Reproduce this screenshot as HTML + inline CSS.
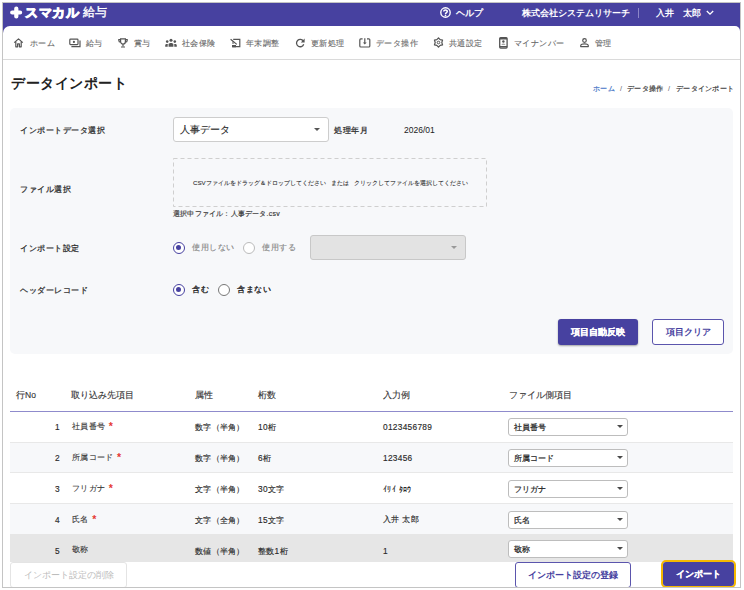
<!DOCTYPE html>
<html><head><meta charset="utf-8">
<style>
*{box-sizing:border-box;margin:0;padding:0}
html,body{width:744px;height:590px;overflow:hidden;background:#fff;font-family:"Liberation Sans",sans-serif;color:#333}
.a{position:absolute;white-space:nowrap}
svg.a{overflow:visible}
#frame{position:absolute;left:2px;top:2px;width:739px;height:586px;border:1px solid #c4c4c4}
.mask{position:absolute;background:#fff}
#hdr{left:3px;top:3px;width:737px;height:30px;background:#4741a0}
#nav{left:3px;top:26px;width:737px;height:34px;background:#fff;border-radius:7px 5px 0 0;border-bottom:1px solid #dadada}
.w{color:#fff}
.nv{font-size:8.3px;color:#6a6a6a;line-height:10px;top:38px;letter-spacing:0.4px;-webkit-text-stroke:0.12px #6a6a6a}
.bc{font-size:7.3px;color:#444;line-height:9px;top:84px;letter-spacing:0.3px;-webkit-text-stroke:0.2px #444}
.dz{top:179px;font-size:6.2px;color:#333;line-height:8px;-webkit-text-stroke:0.1px #333}
.lbl{font-size:8.4px;color:#333;line-height:10px;letter-spacing:0.5px;-webkit-text-stroke:0.28px #333}
.panel{left:10px;top:108px;width:723px;height:246px;background:#f7f8fa;border-radius:5px}
.caret{position:absolute;width:0;height:0;border-left:3px solid transparent;border-right:3px solid transparent;border-top:3.2px solid #555}
.radio{width:12px;height:12px;border-radius:50%;border:1.7px solid #4741a0;background:#fff}
.radio.on::after{content:"";position:absolute;left:1.8px;top:1.8px;width:5px;height:5px;border-radius:50%;background:#4741a0}
.radio.off{border-color:#777}
.radio.dis{border-color:#bbb}
.btnp{background:#4741a0;color:#fff;font-weight:bold;font-size:9px;border-radius:3px;text-align:center;-webkit-text-stroke:0.2px #fff}
.btno{background:#fff;color:#4741a0;font-weight:bold;font-size:9px;border:1px solid #5b55ad;border-radius:3px;text-align:center}
.th{font-size:8.5px;color:#333;line-height:10px;top:390px;-webkit-text-stroke:0.12px #333}
.row{left:10px;width:723px;height:31px;border-bottom:1px solid #e8e8e8}
.td{font-size:8.3px;color:#2a2a2a;line-height:10px;letter-spacing:0.3px;-webkit-text-stroke:0.15px #2a2a2a}
.tn{font-size:8.3px;color:#333;line-height:10px;letter-spacing:0.3px;-webkit-text-stroke:0.1px #333}
.req{color:#e53935;-webkit-text-stroke:0;font-size:10.5px;position:relative;top:1px;left:1px;font-weight:bold}
.rs{width:120px;height:18px;background:#fff;border:1px solid #bdbdbd;border-radius:3px;font-size:8.3px;color:#222;line-height:17px;padding-left:5px;-webkit-text-stroke:0.2px #222}
.rs .caret{left:108px;top:6px;border-left-width:3px;border-right-width:3px;border-top-width:3.5px;border-top-color:#4a4a4a}
</style></head><body>

<!-- header -->
<div class="a" id="hdr"></div>
<svg class="a" style="left:10px;top:6px" width="13" height="13" viewBox="0 0 13 13"><path d="M6.3 2.6 V10.4 M2.2 6.5 H10.1" stroke="#fff" stroke-width="4.2" stroke-linecap="round"/></svg>
<div class="a w" style="left:25px;top:5px;font-size:13px;font-weight:bold;line-height:15px;letter-spacing:0.7px;-webkit-text-stroke:0.9px #fff">スマカル</div>
<div class="a w" style="left:82.5px;top:5px;font-size:12px;line-height:15px;-webkit-text-stroke:0.35px #fff">給与</div>
<svg class="a" style="left:439.5px;top:7px" width="11" height="11" viewBox="0 0 11 11"><circle cx="5.5" cy="5.5" r="4.7" stroke="#fff" stroke-width="1.4" fill="none"/><path d="M3.7 4.4 C3.7 2.5 7.3 2.5 7.3 4.3 C7.3 5.5 5.5 5.6 5.5 7" stroke="#fff" stroke-width="1.5" fill="none"/><circle cx="5.5" cy="8.3" r="0.85" fill="#fff"/></svg>
<div class="a w" style="left:456px;top:8px;font-size:8.5px;line-height:10px;-webkit-text-stroke:0.35px #fff">ヘルプ</div>
<div class="a w" style="left:522px;top:8px;font-size:8.9px;font-weight:bold;line-height:10px">株式会社システムリサーチ</div>
<div class="a" style="left:638px;top:8px;width:1px;height:10px;background:#8c86c8"></div>
<div class="a w" style="left:656px;top:8px;font-size:8.5px;font-weight:bold;line-height:10px">入井　太郎</div>
<svg class="a" style="left:706px;top:10px" width="8" height="6" viewBox="0 0 8 6"><path d="M0.8 1 L4 4.2 L7.2 1" stroke="#fff" stroke-width="1.3" fill="none"/></svg>

<!-- nav -->
<div class="a" id="nav"></div>
<svg class="a" style="left:13px;top:38px" width="11" height="10" viewBox="0 0 11 10"><path d="M1.2 4.6 L5.5 0.9 L9.8 4.6 M2.8 3.4 V8.8 H4.6 V5.9 H6.4 V8.8 H8.2 V3.4" stroke="#555" stroke-width="1.2" fill="none" stroke-linejoin="round"/></svg>
<div class="a nv" style="left:30px">ホーム</div>
<svg class="a" style="left:69px;top:38px" width="12" height="10" viewBox="0 0 12 10"><rect x="0.8" y="1.2" width="8.2" height="5.4" rx="0.8" stroke="#555" stroke-width="1.2" fill="none"/><circle cx="4.9" cy="3.9" r="1.1" fill="#555"/><path d="M11 2.6 V8.6 H2.4" stroke="#555" stroke-width="1.2" fill="none"/></svg>
<div class="a nv" style="left:86px">給与</div>
<svg class="a" style="left:118px;top:38px" width="10" height="10" viewBox="0 0 10 10"><path d="M2.6 0.9 H7.4 V3.5 C7.4 5.2 6.3 6.1 5 6.1 C3.7 6.1 2.6 5.2 2.6 3.5 Z M2.6 1.6 H0.8 V2.6 C0.8 3.6 1.6 4.2 2.7 4.2 M7.4 1.6 H9.2 V2.6 C9.2 3.6 8.4 4.2 7.3 4.2 M5 6.1 V8.3 M3 9 H7" stroke="#555" stroke-width="1.2" fill="none"/></svg>
<div class="a nv" style="left:134px">賞与</div>
<svg class="a" style="left:165px;top:38px" width="12" height="10" viewBox="0 0 12 10"><circle cx="6" cy="2.2" r="1.5" fill="#555"/><circle cx="2.2" cy="3.6" r="1.3" fill="#555"/><circle cx="9.8" cy="3.6" r="1.3" fill="#555"/><path d="M3.6 8.8 V6.6 C3.6 5.6 4.6 5.1 6 5.1 C7.4 5.1 8.4 5.6 8.4 6.6 V8.8 Z" fill="#555"/><path d="M0.2 8.8 V7.4 C0.2 6.3 1 5.9 2.2 5.9 L2.9 6 C2.7 6.3 2.7 6.6 2.7 7 V8.8 Z M11.8 8.8 V7.4 C11.8 6.3 11 5.9 9.8 5.9 L9.1 6 C9.3 6.3 9.3 6.6 9.3 7 V8.8 Z" fill="#555"/></svg>
<div class="a nv" style="left:182px">社会保険</div>
<svg class="a" style="left:230px;top:38px" width="11" height="10" viewBox="0 0 11 10"><path d="M3.2 1.3 H9.8 V8.6 H2.4 M0.6 1.2 L6.8 6.4" stroke="#555" stroke-width="1.2" fill="none"/><path d="M2 7 H6 V9.3 H2 Z" fill="#555"/><path d="M3 3.2 L3 6" stroke="#555" stroke-width="1"/></svg>
<div class="a nv" style="left:246px">年末調整</div>
<svg class="a" style="left:295px;top:38px" width="11" height="10" viewBox="0 0 11 10"><path d="M8.3 3 A3.7 3.7 0 1 0 8.7 6.3" stroke="#555" stroke-width="1.3" fill="none"/><path d="M9.6 0.6 V4.4 H5.8 Z" fill="#555"/></svg>
<div class="a nv" style="left:311px">更新処理</div>
<svg class="a" style="left:359px;top:38px" width="12" height="10" viewBox="0 0 12 10"><path d="M3.6 0.9 H1.8 C1.2 0.9 0.8 1.3 0.8 1.9 V8 C0.8 8.6 1.2 9 1.8 9 H9.8 C10.4 9 10.8 8.6 10.8 8 V1.9 C10.8 1.3 10.4 0.9 9.8 0.9 H8" stroke="#555" stroke-width="1.2" fill="none"/><path d="M5.8 0.3 V5" stroke="#555" stroke-width="1.2"/><path d="M3.9 4.6 H7.7 L5.8 6.6 Z" fill="#555"/></svg>
<div class="a nv" style="left:376px">データ操作</div>
<svg class="a" style="left:433px;top:37px" width="11" height="11" viewBox="0 0 11 11"><path d="M5.50 0.80 L7.15 2.64 L9.57 3.15 L8.80 5.50 L9.57 7.85 L7.15 8.36 L5.50 10.20 L3.85 8.36 L1.43 7.85 L2.20 5.50 L1.43 3.15 L3.85 2.64 Z" stroke="#555" stroke-width="1.2" fill="none" stroke-linejoin="round"/><circle cx="5.5" cy="5.5" r="1.3" stroke="#555" stroke-width="1" fill="none"/></svg>
<div class="a nv" style="left:449px">共通設定</div>
<svg class="a" style="left:499px;top:37px" width="9" height="12" viewBox="0 0 9 12"><rect x="0.7" y="0.7" width="7.4" height="10.4" rx="1" stroke="#555" stroke-width="1.3" fill="none"/><path d="M0.7 1.6 H8.1 M0.7 9.8 H8.1" stroke="#555" stroke-width="1.6"/><circle cx="4.4" cy="4.5" r="1.2" fill="#555"/><path d="M2.4 7.6 C2.6 6.4 6.2 6.4 6.4 7.6 Z" fill="#555"/></svg>
<div class="a nv" style="left:514px">マイナンバー</div>
<svg class="a" style="left:580px;top:38px" width="9" height="10" viewBox="0 0 9 10"><circle cx="4.5" cy="2.5" r="1.8" stroke="#555" stroke-width="1.2" fill="none"/><path d="M0.7 8.6 V7.8 C0.7 6.4 2.6 5.8 4.5 5.8 C6.4 5.8 8.3 6.4 8.3 7.8 V8.6 Z" stroke="#555" stroke-width="1.2" fill="none" stroke-linejoin="round"/></svg>
<div class="a nv" style="left:595px">管理</div>

<!-- title -->
<div class="a" style="left:11px;top:74px;font-size:14.2px;font-weight:bold;color:#222;line-height:18px;letter-spacing:0.5px">データインポート</div>
<div class="a bc" style="left:593px;color:#4a78c8;-webkit-text-stroke:0.2px #4a78c8">ホーム</div>
<div class="a bc" style="left:620px;-webkit-text-stroke:0;color:#666">/</div>
<div class="a bc" style="left:627px">データ操作</div>
<div class="a bc" style="left:668px;-webkit-text-stroke:0;color:#666">/</div>
<div class="a bc" style="left:676px">データインポート</div>

<!-- panel -->
<div class="a panel"></div>
<div class="a lbl" style="left:20px;top:125px">インポートデータ選択</div>
<div class="a" style="left:173px;top:117px;width:156px;height:25px;background:#fff;border:1px solid #cdcdcd;border-radius:3px"></div>
<div class="a" style="left:180px;top:123px;font-size:9.6px;color:#282828;line-height:13px;-webkit-text-stroke:0.1px #282828">人事データ</div>
<div class="caret" style="left:314px;top:128px"></div>
<div class="a lbl" style="left:334px;top:125px">処理年月</div>
<div class="a" style="left:404px;top:125px;font-size:8.5px;color:#222;line-height:10px">2026/01</div>

<div class="a lbl" style="left:20px;top:184px">ファイル選択</div>
<svg class="a" style="left:173px;top:158px" width="315" height="50"><rect x="0.5" y="0.5" width="313" height="48" fill="none" stroke="#cfcfcf" stroke-width="1" stroke-dasharray="4 3"/></svg>
<div class="a dz" style="left:193px">CSVファイルをドラッグ＆ドロップしてください</div>
<div class="a dz" style="left:331px">または</div>
<div class="a dz" style="left:354px">クリックしてファイルを選択してください</div>
<div class="a" style="left:173px;top:209px;font-size:7px;color:#333;line-height:9px;letter-spacing:0.2px;-webkit-text-stroke:0.15px #333">選択中ファイル：人事データ.csv</div>

<div class="a lbl" style="left:20px;top:243px">インポート設定</div>
<div class="a radio on" style="left:173px;top:242px"></div>
<div class="a" style="left:192px;top:243px;font-size:8.2px;color:#888;line-height:10px;letter-spacing:0.5px;-webkit-text-stroke:0.15px #888">使用しない</div>
<div class="a radio dis" style="left:243px;top:242px"></div>
<div class="a" style="left:262px;top:243px;font-size:8.2px;color:#888;line-height:10px;letter-spacing:0.5px;-webkit-text-stroke:0.15px #888">使用する</div>
<div class="a" style="left:310px;top:235px;width:156px;height:25px;background:#e3e3e3;border:1px solid #c8c8c8;border-radius:3px"></div>
<div class="caret" style="left:451px;top:246px;border-top-color:#999"></div>

<div class="a lbl" style="left:20px;top:285px">ヘッダーレコード</div>
<div class="a radio on" style="left:173px;top:284px"></div>
<div class="a" style="left:192px;top:285px;font-size:8.2px;color:#222;line-height:10px;letter-spacing:0.5px;-webkit-text-stroke:0.3px #222">含む</div>
<div class="a radio off" style="left:218px;top:284px"></div>
<div class="a" style="left:237px;top:285px;font-size:8.2px;color:#222;line-height:10px;letter-spacing:0.5px;-webkit-text-stroke:0.3px #222">含まない</div>

<div class="a btnp" style="left:558px;top:319px;width:80px;height:26px;line-height:27px;box-shadow:0 1px 2px rgba(0,0,0,.35)">項目自動反映</div>
<div class="a btno" style="left:652px;top:319px;width:72px;height:26px;line-height:24px">項目クリア</div>

<!-- table -->
<div class="a th" style="left:16px">行No</div>
<div class="a th" style="left:71px">取り込み先項目</div>
<div class="a th" style="left:195px">属性</div>
<div class="a th" style="left:258px">桁数</div>
<div class="a th" style="left:383px">入力例</div>
<div class="a th" style="left:509px">ファイル側項目</div>
<div class="a" style="left:10px;top:411px;width:723px;height:1.5px;background:#8f8bcc"></div>

<div class="a row" style="top:412px;height:31px;background:#fff"></div>
<div class="a row" style="top:443px;height:30px;background:#f7f8fa"></div>
<div class="a row" style="top:473px;height:31px;background:#fff"></div>
<div class="a row" style="top:504px;height:30px;background:#f7f8fa;border-bottom:none"></div>
<div class="a row" style="top:533.5px;height:28.5px;background:#e6e6e6;border-bottom:none"></div>

<div class="a td" style="left:55px;top:422px">1</div>
<div class="a tn" style="left:72px;top:420px">社員番号 <span class="req">*</span></div>
<div class="a td" style="left:195px;top:422px">数字（半角）</div>
<div class="a td" style="left:258px;top:422px">10桁</div>
<div class="a td" style="left:383px;top:422px">0123456789</div>
<div class="a rs" style="left:508px;top:418px">社員番号<div class="caret"></div></div>

<div class="a td" style="left:55px;top:453px">2</div>
<div class="a tn" style="left:72px;top:451px">所属コード <span class="req">*</span></div>
<div class="a td" style="left:195px;top:453px">数字（半角）</div>
<div class="a td" style="left:258px;top:453px">6桁</div>
<div class="a td" style="left:383px;top:453px">123456</div>
<div class="a rs" style="left:508px;top:449px">所属コード<div class="caret"></div></div>

<div class="a td" style="left:55px;top:484px">3</div>
<div class="a tn" style="left:72px;top:482px">フリガナ <span class="req">*</span></div>
<div class="a td" style="left:195px;top:484px">文字（半角）</div>
<div class="a td" style="left:258px;top:484px">30文字</div>
<div class="a td" style="left:383px;top:484px">ｲﾘｲ ﾀﾛｳ</div>
<div class="a rs" style="left:508px;top:480px">フリガナ<div class="caret"></div></div>

<div class="a td" style="left:55px;top:515px">4</div>
<div class="a tn" style="left:72px;top:513px">氏名 <span class="req">*</span></div>
<div class="a td" style="left:195px;top:515px">文字（全角）</div>
<div class="a td" style="left:258px;top:515px">15文字</div>
<div class="a td" style="left:383px;top:514px">入井 太郎</div>
<div class="a rs" style="left:508px;top:511px">氏名<div class="caret"></div></div>

<div class="a td" style="left:55px;top:546px">5</div>
<div class="a tn" style="left:72px;top:544px">敬称</div>
<div class="a td" style="left:195px;top:546px">数値（半角）</div>
<div class="a td" style="left:258px;top:546px">整数1桁</div>
<div class="a td" style="left:383px;top:546px">1</div>
<div class="a rs" style="left:508px;top:540px">敬称<div class="caret"></div></div>

<!-- footer -->
<div class="a" style="left:10px;top:562px;width:117px;height:26px;background:#fff;border:1px solid #e4e4e4;border-radius:3px;font-size:9px;color:#bbb;text-align:center;line-height:24px">インポート設定の削除</div>
<div class="a btno" style="left:515px;top:562px;width:116px;height:26px;line-height:24px">インポート設定の登録</div>
<div class="a" style="left:660.5px;top:560px;width:75.5px;height:27.5px;border:2px solid #f5b800;border-radius:5px"></div>
<div class="a btnp" style="left:662.5px;top:562px;width:71.5px;height:23.5px;line-height:24px;border-radius:3px">インポート</div>

<!-- frame -->
<div class="mask" style="left:0;top:0;width:744px;height:2px"></div>
<div class="mask" style="left:0;top:0;width:2px;height:590px"></div>
<div class="mask" style="left:741px;top:0;width:3px;height:590px"></div>
<div class="mask" style="left:0;top:588px;width:744px;height:2px"></div>
<div id="frame"></div>
</body></html>
